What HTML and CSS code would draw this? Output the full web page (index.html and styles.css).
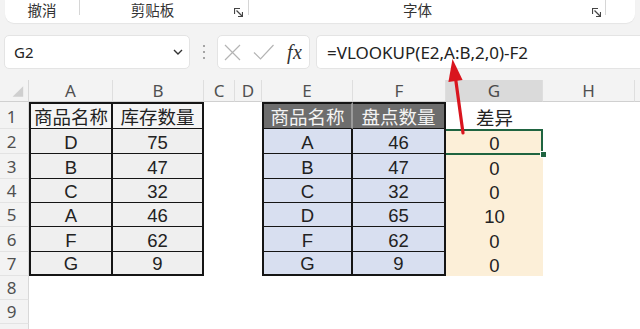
FILE: index.html
```html
<!DOCTYPE html>
<html lang="zh-CN">
<head>
<meta charset="utf-8">
<title>VLOOKUP</title>
<link rel="stylesheet" href="styles.css">
</head>
<body>
<div class="app">
  <div class="ribbon">
    <div class="grp g-undo"><span class="glabel">撤消</span></div>
    <div class="grp g-clip"><span class="glabel">剪贴板</span><span class="launch"><svg width="9" height="9" viewBox="0 0 9 9"><path d="M0.5 6V0.5H6" fill="none" stroke="#444" stroke-width="1.2"/><path d="M2.5 2.5L8 8" stroke="#444" stroke-width="1.2"/><path d="M8.5 4v4.5H4" fill="none" stroke="#444" stroke-width="1.2"/></svg></span></div>
    <div class="grp g-font"><span class="glabel">字体</span><span class="launch"><svg width="9" height="9" viewBox="0 0 9 9"><path d="M0.5 6V0.5H6" fill="none" stroke="#444" stroke-width="1.2"/><path d="M2.5 2.5L8 8" stroke="#444" stroke-width="1.2"/><path d="M8.5 4v4.5H4" fill="none" stroke="#444" stroke-width="1.2"/></svg></span></div>
    <div class="grp g-rest"></div>
  </div>

  <div class="fbar">
    <div class="namebox"><span class="nb-text">G2</span><svg class="chev" width="10" height="6" viewBox="0 0 10 6"><path d="M1 1l4 4 4-4" fill="none" stroke="#333" stroke-width="1.4"/></svg></div>
    <div class="dots"><i></i><i></i><i></i></div>
    <div class="fxbox">
      <svg width="17" height="17" viewBox="0 0 17 17"><path d="M1 1L16 16M16 1L1 16" stroke="#b4b4b4" stroke-width="1.2"/></svg>
      <svg width="21" height="16" viewBox="0 0 21 16"><path d="M1 8.5L7.5 15L20.5 1" fill="none" stroke="#b4b4b4" stroke-width="1.2"/></svg>
      <span class="fx">fx</span>
    </div>
    <div class="formula">=VLOOKUP(E2,A:B,2,0)-F2</div>
  </div>

  <div class="sheet">
    <div class="corner"><svg width="29" height="22" viewBox="0 0 29 22"><polygon points="24,6 24,17 13,17" fill="#cfcfcf"/></svg></div>
    <div class="ch">A</div><div class="ch">B</div><div class="ch">C</div><div class="ch">D</div><div class="ch">E</div><div class="ch">F</div><div class="ch sel">G</div><div class="ch">H</div><div class="ch last"></div>

    <div class="rh">1</div>
    <div class="t1 th bl bt">商品名称</div><div class="t1 th bt">库存数量</div>
    <div class="c"></div><div class="c"></div>
    <div class="t2h bl bt e1">商品名称</div><div class="t2h bt">盘点数量</div>
    <div class="gh">差异</div><div class="c"></div><div class="c"></div>

    <div class="rh">2</div>
    <div class="t1 bl">D</div><div class="t1">75</div>
    <div class="c"></div><div class="c"></div>
    <div class="t2 bl">A</div><div class="t2">46</div>
    <div class="g active">0</div><div class="c"></div><div class="c"></div>

    <div class="rh">3</div>
    <div class="t1 bl">B</div><div class="t1">47</div>
    <div class="c"></div><div class="c"></div>
    <div class="t2 bl">B</div><div class="t2">47</div>
    <div class="g">0</div><div class="c"></div><div class="c"></div>

    <div class="rh">4</div>
    <div class="t1 bl">C</div><div class="t1">32</div>
    <div class="c"></div><div class="c"></div>
    <div class="t2 bl">C</div><div class="t2">32</div>
    <div class="g">0</div><div class="c"></div><div class="c"></div>

    <div class="rh">5</div>
    <div class="t1 bl">A</div><div class="t1">46</div>
    <div class="c"></div><div class="c"></div>
    <div class="t2 bl">D</div><div class="t2">65</div>
    <div class="g">10</div><div class="c"></div><div class="c"></div>

    <div class="rh">6</div>
    <div class="t1 bl">F</div><div class="t1">62</div>
    <div class="c"></div><div class="c"></div>
    <div class="t2 bl">F</div><div class="t2">62</div>
    <div class="g">0</div><div class="c"></div><div class="c"></div>

    <div class="rh">7</div>
    <div class="t1 bl bb">G</div><div class="t1 bb">9</div>
    <div class="c"></div><div class="c"></div>
    <div class="t2 bl bb">G</div><div class="t2 bb">9</div>
    <div class="g">0</div><div class="c"></div><div class="c"></div>

    <div class="rh">8</div>
    <div class="c"></div><div class="c"></div><div class="c"></div><div class="c"></div><div class="c"></div><div class="c"></div><div class="c"></div><div class="c"></div><div class="c"></div>
    <div class="rh">9</div>
    <div class="c"></div><div class="c"></div><div class="c"></div><div class="c"></div><div class="c"></div><div class="c"></div><div class="c"></div><div class="c"></div><div class="c"></div>
    <div class="rh"></div>
    <div class="c"></div><div class="c"></div><div class="c"></div><div class="c"></div><div class="c"></div><div class="c"></div><div class="c"></div><div class="c"></div><div class="c"></div>
  </div>

  <svg class="arrow" width="640" height="329" viewBox="0 0 640 329">
    <line x1="463" y1="133" x2="455.5" y2="78" stroke="#d9151e" stroke-width="3.2" stroke-linecap="round"/>
    <polygon points="452.5,59 462.6,80 448.4,82" fill="#d9151e"/>
  </svg>
</div>
</body>
</html>
```

FILE: styles.css
```css
html, body {
  margin: 0;
  padding: 0;
}
body {
  width: 640px;
  height: 329px;
  overflow: hidden;
  background: #f3f3f3;
  font-family: "Noto Sans", "Noto Sans CJK SC", sans-serif;
  color: #222;
}
.app {
  position: relative;
  width: 640px;
  height: 329px;
  overflow: hidden;
}

/* ribbon */
.ribbon {
  display: flex;
  height: 23px;
  margin: 0 5px;
  background: #fff;
  border-radius: 0 0 9px 9px;
  box-shadow: 0 1px 1px rgba(0,0,0,0.06);
}
.grp {
  display: flex;
  align-items: flex-start;
  position: relative;
}
.grp + .grp::before {
  content: "";
  position: absolute;
  left: 0;
  top: 0;
  width: 1px;
  height: 15px;
  background: #d6d6d6;
}
.glabel {
  flex: 1;
  text-align: center;
  font-family: "Noto Sans CJK SC", sans-serif;
  font-size: 14.5px;
  line-height: 17px;
  padding-top: 1px;
  color: #333;
}
.g-undo { width: 74px; }
.g-clip { width: 169px; }
.g-font { width: 357px; }
.g-rest { flex: 1; }
.launch {
  display: flex;
  padding-top: 8px;
}
.g-clip .launch { width: 14px; padding-left: 8px; }
.g-font .launch { width: 13px; padding-left: 5px; }

/* formula bar */
.fbar {
  display: flex;
  height: 34px;
  margin-top: 12px;
  padding-left: 4px;
}
.namebox {
  width: 186px;
  box-sizing: border-box;
  background: #fff;
  border: 1px solid #e4e4e4;
  border-radius: 5px;
  display: flex;
  align-items: center;
  padding: 0 6px 0 9px;
}
.nb-text {
  flex: 1;
  font-size: 15px;
  color: #222;
}
.dots {
  width: 27px;
  display: flex;
  flex-direction: column;
  align-items: center;
  justify-content: center;
  gap: 4px;
}
.dots i {
  display: block;
  width: 2px;
  height: 2px;
  border-radius: 1px;
  background: #8a8a8a;
}
.fxbox {
  width: 93px;
  box-sizing: border-box;
  background: #fff;
  border: 1px solid #e4e4e4;
  border-radius: 5px;
  display: flex;
  align-items: center;
  padding: 0 0 0 6px;
  gap: 12px;
}
.fx {
  font-family: "Liberation Serif", "DejaVu Serif", serif;
  font-style: italic;
  font-size: 20px;
  color: #333;
  margin-left: 1px;
  letter-spacing: 0.5px;
}
.formula {
  flex: 1;
  margin-left: 6px;
  background: #fff;
  border: 1px solid #e4e4e4;
  border-right: none;
  border-radius: 5px 0 0 5px;
  display: flex;
  align-items: center;
  padding-left: 10px;
  font-size: 17px;
  color: #222;
}

/* sheet */
.sheet {
  display: grid;
  grid-template-columns: 29px 84px 91px 31px 27px 91px 93px 97px 92px 1fr;
  grid-template-rows: 22px 27px 25px 25px 24px 24px 25px 24px 24px 24px 24px;
  margin-top: 11px;
  background: #fff;
}
.sheet > div {
  box-sizing: border-box;
  display: flex;
  justify-content: center;
  align-items: flex-end;
  font-family: "Liberation Sans", "Noto Sans CJK SC", sans-serif;
  font-size: 18.5px;
  line-height: 20px;
  white-space: nowrap;
}
.sheet > .corner {
  background: #f3f3f3;
  border-right: 1px solid #d8d8d8;
  border-bottom: 1px solid #d0d0d0;
  align-items: stretch;
}
.sheet > .ch {
  background: #f3f3f3;
  border-right: 1px solid #dedede;
  border-bottom: 1px solid #d0d0d0;
  align-items: center;
  font-family: "Noto Sans", sans-serif;
  font-size: 17px;
  color: #505050;
}
.sheet > .ch.sel {
  background: #dadada;
  color: #4a4a4a;
}
.sheet > .ch.last { border-right: none; }
.sheet > .rh {
  background: #f3f3f3;
  border-right: 1px solid #d8d8d8;
  border-bottom: 1px solid #e3e3e3;
  font-family: "Noto Sans", sans-serif;
  font-size: 17px;
  line-height: 20px;
  color: #505050;
  padding-right: 5px;
  padding-bottom: 1px;
}
.sheet > .c { background: #fff; }

.sheet > .t1,
.sheet > .t2,
.sheet > .t2h {
  border-right: 2px solid #151515;
  border-bottom: 1px solid #151515;
}
.sheet > .t1 { background: #efefef; }
.sheet > .t1.th { background: #f4f4f4; }
.sheet > .t2 { background: #d8dff0; }
.sheet > .t2h { background: #6d6d6d; color: #f4f4f4; }
.sheet > .t2h.e1 { border-right-color: #9a9a9a; }
.sheet > .bl { border-left: 2px solid #151515; }
.sheet > .bt { border-top: 2px solid #151515; }
.sheet > .bb { border-bottom: 2px solid #151515; }

.sheet > .gh { background: #fff; }
.sheet > .g { background: #fcefd8; }
.sheet > .g.active {
  position: relative;
}
.sheet > .g.active::before {
  content: "";
  position: absolute;
  left: 0;
  top: 0;
  right: 0;
  bottom: -1px;
  border-top: 2px solid #1f6440;
  border-right: 2px solid #1f6440;
  border-bottom: 2px solid #1f6440;
}
.sheet > .g.active::after {
  content: "";
  position: absolute;
  right: -4px;
  bottom: -4px;
  width: 5px;
  height: 5px;
  background: #1f6440;
  border: 1px solid #fff;
}

.arrow {
  position: absolute;
  left: 0;
  top: 0;
  pointer-events: none;
}
```
